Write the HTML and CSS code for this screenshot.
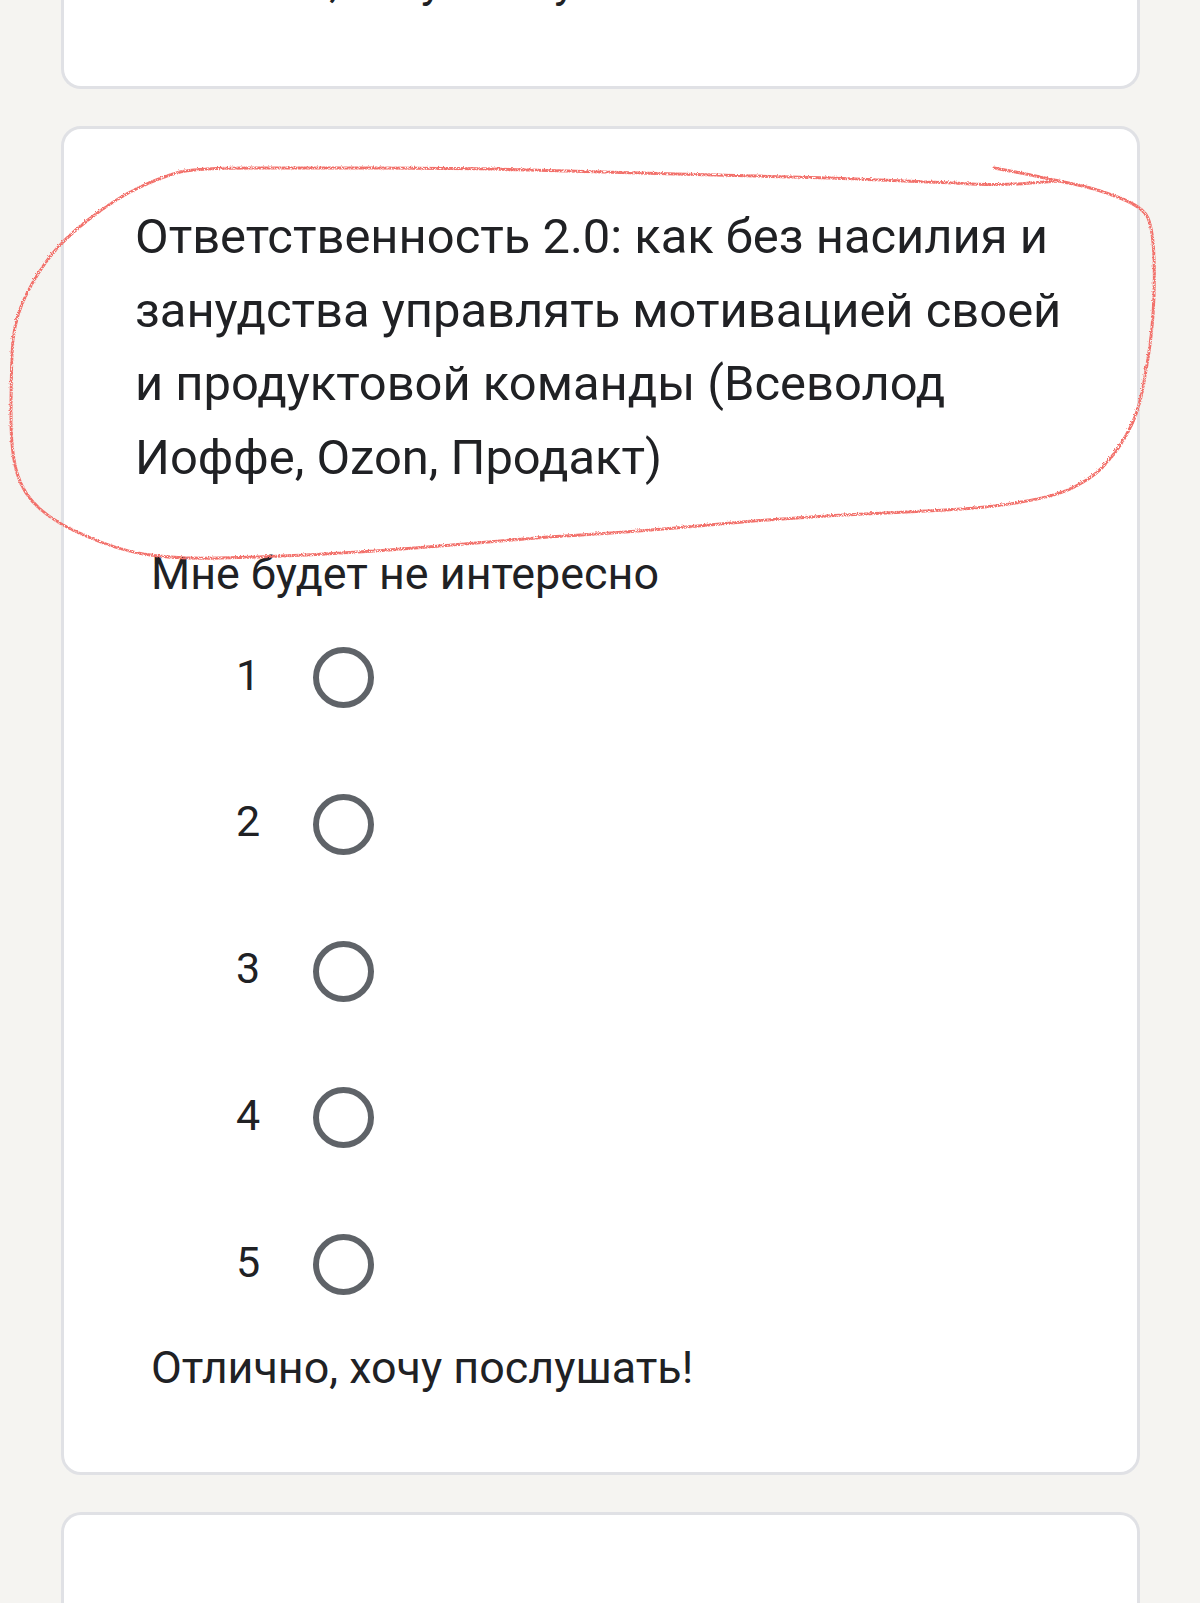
FILE: index.html
```html
<!DOCTYPE html>
<html lang="ru">
<head>
<meta charset="utf-8">
<title>Форма</title>
<link rel="stylesheet" href="styles.css">
</head>
<body>
<div class="page">
  <div class="card card-top">
    <div class="label">Отлично, хочу послушать!</div>
  </div>
  <div class="card card-main">
    <h2 class="title">Ответственность 2.0: как без насилия и занудства управлять мотивацией своей и продуктовой команды (Всеволод Иоффе, Ozon, Продакт)</h2>
    <div class="label label-low">Мне будет не интересно</div>
    <div class="scale">
      <div class="row"><span class="num">1</span><span class="radio"></span></div>
      <div class="row"><span class="num">2</span><span class="radio"></span></div>
      <div class="row"><span class="num">3</span><span class="radio"></span></div>
      <div class="row"><span class="num">4</span><span class="radio"></span></div>
      <div class="row"><span class="num">5</span><span class="radio"></span></div>
    </div>
    <div class="label label-high">Отлично, хочу послушать!</div>
  </div>
  <div class="card card-bottom"></div>
</div>
<svg class="scribble" viewBox="0 0 1200 1603" fill="none" aria-hidden="true">
  <defs>
    <filter id="pencil" x="-5%" y="-5%" width="110%" height="110%">
      <feTurbulence type="fractalNoise" baseFrequency="0.7" numOctaves="2" seed="4" result="noise"/>
      <feDisplacementMap in="SourceGraphic" in2="noise" scale="3" result="shifted"/>
      <feColorMatrix in="noise" type="matrix" values="0 0 0 0 0  0 0 0 0 0  0 0 0 0 0  0 0 0 5 -1.4" result="grain"/>
      <feComposite in="shifted" in2="grain" operator="in"/>
    </filter>
  </defs>
  <path class="scribble-line" filter="url(#pencil)" d="M994 168 L1026 174 Q1059 181 1078 185 Q1097 189 1120 198 Q1143 207 1148 218 Q1153 230 1154 258 Q1155 287 1153 315 Q1151 344 1145 376 Q1140 409 1130 428 Q1120 448 1108 461 Q1097 475 1078 485 Q1059 496 1021 502 Q983 509 906 512 Q830 515 753 521 Q677 528 638 531 Q600 534 548 537 Q497 541 440 546 Q383 551 325 554 Q268 557 220 558 Q172 559 143 554 Q115 549 86 536 Q57 524 40 509 Q23 494 17 473 Q11 452 11 417 Q11 383 12 354 Q13 325 22 304 Q31 283 46 262 Q61 241 88 220 Q115 199 138 188 Q161 177 180 172 Q199 168 252 168 Q306 168 382 168 Q459 168 530 170 Q600 172 676 174 Q753 176 830 178 Q906 181 954 183 Q1002 186 1030 183 L1059 181"/>
</svg>
</body>
</html>
```
FILE: styles.css
```css
* { box-sizing: border-box; }
html, body { margin: 0; padding: 0; }
body {
  width: 1200px;
  height: 1603px;
  overflow: hidden;
  background: #f5f4f1;
  font-family: Roboto, "Noto Sans", sans-serif;
  color: #202124;
  position: relative;
}
.page {
  display: flex;
  flex-direction: column;
  gap: 37px;
  padding: 0 60px 0 61px;
}
.card {
  background: #fff;
  border: 3px solid #e0e1e5;
  border-radius: 20px;
}
.card-top {
  height: 89px;
  display: flex;
  flex-direction: column;
  justify-content: flex-end;
  padding: 0 71px 79px;
  border-top: 0;
  border-top-left-radius: 0;
  border-top-right-radius: 0;
}
.card-main {
  height: 1349px;
  padding: 71px 60px 0 71px;
}
.card-bottom {
  height: 91px;
  border-bottom: 0;
  border-bottom-left-radius: 0;
  border-bottom-right-radius: 0;
}
.title {
  margin: 0;
  font-size: 48.9px;
  font-weight: 400;
  line-height: 73.5px;
}
.label {
  flex-shrink: 0;
  font-size: 44.85px;
  line-height: 50px;
  margin-left: 16px;
}
.label-low { margin-top: 55px; }
.scale {
  display: flex;
  flex-direction: column;
  gap: 85.75px;
  margin-top: 48px;
  padding-left: 101px;
}
.row {
  display: flex;
  align-items: center;
  height: 61px;
}
.num {
  width: 77px;
  padding-bottom: 5px;
  font-size: 43px;
  line-height: 61px;
}
.radio {
  width: 61px;
  height: 61px;
  border: 6px solid #5f6368;
  border-radius: 50%;
}
.label-high { margin-top: 48px; }
.scribble {
  position: absolute;
  left: 0;
  top: 0;
  width: 1200px;
  height: 1603px;
  pointer-events: none;
}
.scribble-line {
  stroke: #f2706a;
  stroke-width: 3;
  stroke-linecap: round;
  stroke-linejoin: round;
}
```
